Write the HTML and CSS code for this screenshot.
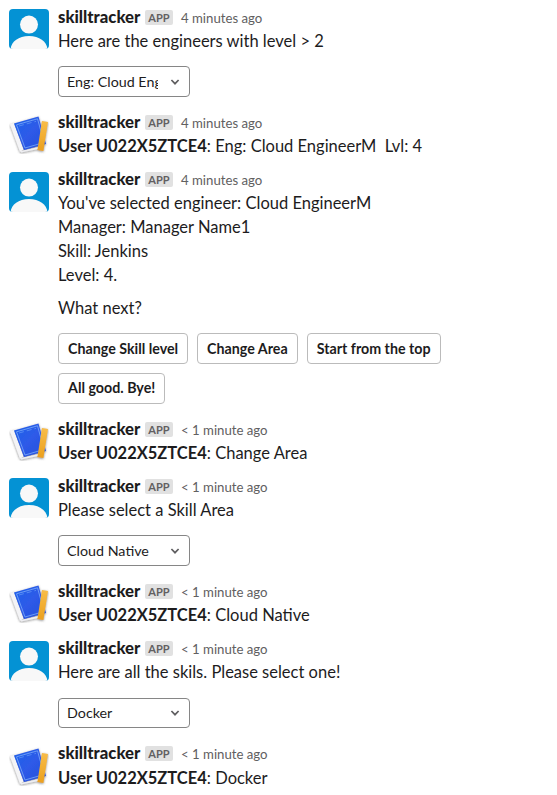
FILE: index.html
```
<!DOCTYPE html>
<html lang="en">
<head>
<meta charset="utf-8">
<title>skilltracker</title>
<link rel="stylesheet" href="styles.css">
</head>
<body>
<svg class="defs" width="0" height="0">
  <defs>
    <filter id="shadow" x="-20%" y="-20%" width="140%" height="140%"><feDropShadow dx="0" dy=".8" stdDeviation="1" flood-color="#555" flood-opacity=".7"/></filter>
    <linearGradient id="cover" x1="0" y1="0" x2="1" y2="1"><stop offset="0" stop-color="#1d62ea"/><stop offset=".5" stop-color="#2e5ae8"/><stop offset="1" stop-color="#2450da"/></linearGradient>
    <linearGradient id="gold" x1="0" y1="0" x2="0" y2="1"><stop offset="0" stop-color="#f8bd49"/><stop offset="1" stop-color="#eba01e"/></linearGradient>
  </defs>
  <symbol id="person" viewBox="0 0 40 40">
    <rect width="40" height="40" fill="#0492d4"/>
    <circle cx="20" cy="15.600" r="9" fill="#f8f8f8"/>
    <path d="M1.500 40C2.500 32.500 9.500 27 20 27s17.500 5.500 18.500 13z" fill="#f8f8f8"/>
  </symbol>
  <symbol id="book" viewBox="0 0 40 40">
    <g filter="url(#shadow)">
      <path d="M1 10.500 5 9 14.500 35.500 11 38z" fill="#f4f4f6"/>
      <path d="M12 37 34 32v2L12 38.500z" fill="#eeeef2"/>
      <path d="M5 9.500 29.500 2.500 37 30 15 36z" fill="url(#cover)"/>
      <path d="M7.500 10.800 28.500 4.800 35 28.500 16 34z" fill="none" stroke="#86b6fa" stroke-width=".7"/>
      <path d="M10 12 27 7.300" stroke="#72a5f8" stroke-width=".6" stroke-dasharray="5 3"/>
      <path d="M33 7 39 8 34.400 37 28.400 36z" fill="url(#gold)"/>
    </g>
  </symbol>
  <symbol id="chevron" viewBox="0 0 10 8">
    <path d="M1.400 2 5 5.700 8.600 2" fill="none" stroke="#5f5e60" stroke-width="1.700"/>
  </symbol>
</svg>
<main class="messages">
  <article class="message">
    <svg class="avatar"><use href="#person"/></svg>
    <div class="content">
      <header class="head"><b class="name">skilltracker</b><span class="badge">APP</span><time class="time">4 minutes ago</time></header>
      <p class="text">Here are the engineers with level &gt; 2</p>
      <div class="select"><span class="value">Eng: Cloud EngineerM</span><svg class="chevron"><use href="#chevron"/></svg></div>
    </div>
  </article>
  <article class="message">
    <svg class="avatar"><use href="#book"/></svg>
    <div class="content">
      <header class="head"><b class="name">skilltracker</b><span class="badge">APP</span><time class="time">4 minutes ago</time></header>
      <p class="text"><b>User U022X5ZTCE4</b>: Eng: Cloud EngineerM&nbsp; Lvl: 4</p>
    </div>
  </article>
  <article class="message low">
    <svg class="avatar"><use href="#person"/></svg>
    <div class="content">
      <header class="head"><b class="name">skilltracker</b><span class="badge">APP</span><time class="time">4 minutes ago</time></header>
      <p class="text">You've selected engineer: Cloud EngineerM<br>Manager: Manager Name1<br>Skill: Jenkins<br>Level: 4.</p>
      <p class="text next">What next?</p>
      <div class="actions">
        <button class="button">Change Skill level</button>
        <button class="button">Change Area</button>
        <button class="button">Start from the top</button>
        <button class="button bye">All good. Bye!</button>
      </div>
    </div>
  </article>
  <article class="message">
    <svg class="avatar"><use href="#book"/></svg>
    <div class="content">
      <header class="head"><b class="name">skilltracker</b><span class="badge">APP</span><time class="time">&lt; 1 minute ago</time></header>
      <p class="text"><b>User U022X5ZTCE4</b>: Change Area</p>
    </div>
  </article>
  <article class="message">
    <svg class="avatar"><use href="#person"/></svg>
    <div class="content">
      <header class="head"><b class="name">skilltracker</b><span class="badge">APP</span><time class="time">&lt; 1 minute ago</time></header>
      <p class="text">Please select a Skill Area</p>
      <div class="select"><span class="value">Cloud Native</span><svg class="chevron"><use href="#chevron"/></svg></div>
    </div>
  </article>
  <article class="message">
    <svg class="avatar"><use href="#book"/></svg>
    <div class="content">
      <header class="head"><b class="name">skilltracker</b><span class="badge">APP</span><time class="time">&lt; 1 minute ago</time></header>
      <p class="text"><b>User U022X5ZTCE4</b>: Cloud Native</p>
    </div>
  </article>
  <article class="message low">
    <svg class="avatar"><use href="#person"/></svg>
    <div class="content">
      <header class="head"><b class="name">skilltracker</b><span class="badge">APP</span><time class="time">&lt; 1 minute ago</time></header>
      <p class="text">Here are all the skils. Please select one!</p>
      <div class="select last"><span class="value">Docker</span><svg class="chevron"><use href="#chevron"/></svg></div>
    </div>
  </article>
  <article class="message low">
    <svg class="avatar"><use href="#book"/></svg>
    <div class="content">
      <header class="head"><b class="name">skilltracker</b><span class="badge">APP</span><time class="time">&lt; 1 minute ago</time></header>
      <p class="text end"><b>User U022X5ZTCE4</b>: Docker</p>
    </div>
  </article>
</main>
</body>
</html>
```
FILE: styles.css
```
* { box-sizing: border-box; }
body {
  margin: 0;
  height: 795px;
  overflow: hidden;
  background: #fff;
  color: #1d1c1d;
  font: 16.5px/24px Lato, sans-serif;
}
.defs { position: absolute; }
.messages { padding-top: 5px; }
.message { display: flex; gap: 9px; padding: 0 9px 9px; }
.avatar { flex: none; width: 40px; height: 40px; margin-top: 4px; border-radius: 4px; }
.low .avatar { margin-top: 5px; }
.content { flex: 1; min-width: 0; }
.head { display: flex; align-items: center; height: 24px; }
.name { width: 82px; font-size: 16.7px; font-weight: 900; }
.badge {
  width: 28px;
  height: 15px;
  margin-left: 5px;
  border-radius: 2px;
  background: #e1e1e1;
  color: #616061;
  font-size: 11px;
  font-weight: 700;
  line-height: 15px;
  text-align: center;
}
.time { margin: 2px 0 0 8px; color: #616061; font-size: 13.2px; }
.text { margin: 0; }
.text b { font-weight: 700; }
.next { margin-top: 9px; }
.end { margin-top: 1px; }
.select {
  display: flex;
  align-items: center;
  justify-content: space-between;
  width: 132px;
  height: 31px;
  margin: 13px 0 4px;
  padding: 0 9px 0 8px;
  border: 1px solid #868686;
  border-radius: 4px;
  font-size: 14.3px;
}
.select.last { height: 30px; margin-top: 14px; }
.value { width: 91px; overflow: hidden; white-space: nowrap; }
.chevron { width: 10px; height: 8px; }
.actions { display: flex; flex-wrap: wrap; gap: 9px; width: 400px; margin: 13px 0 4px; }
.button {
  height: 31px;
  padding: 0 9px;
  border: 1px solid #bbb;
  border-radius: 4px;
  background: #fff;
  color: #1d1c1d;
  font: 700 14.25px/29px Lato, sans-serif;
}
.bye { padding-bottom: 2px; line-height: 27px; }
```
